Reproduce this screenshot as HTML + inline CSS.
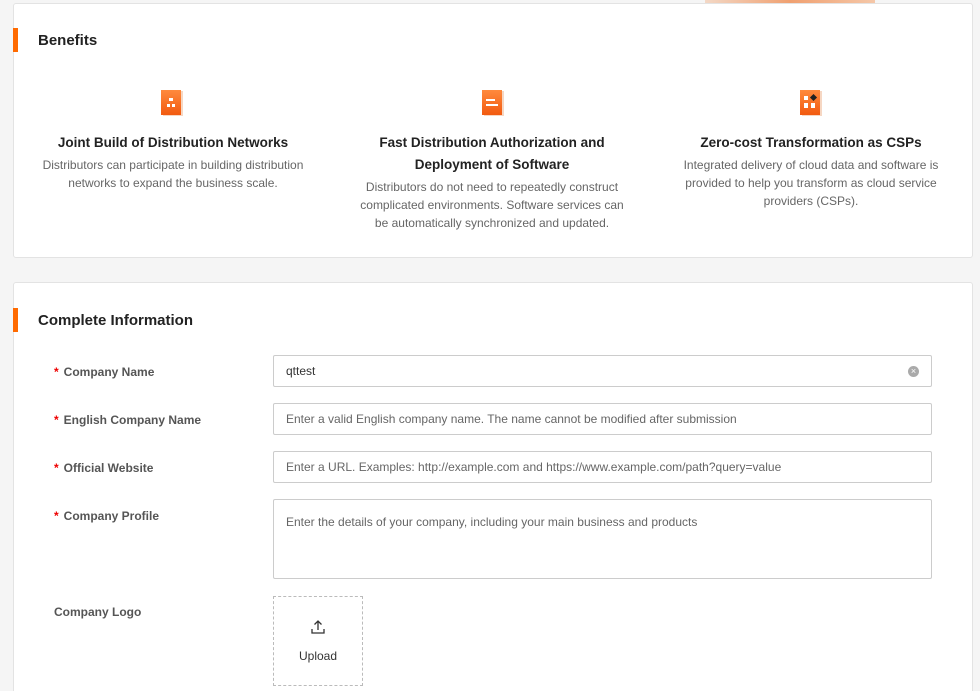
<!DOCTYPE html>
<html style="width:980px;height:691px;overflow:hidden"><head><style>
body{margin:0;width:980px;height:691px;background:#f5f5f5;font-family:"Liberation Sans",sans-serif;overflow:hidden;position:relative;color:#333}
.card{position:absolute;left:13px;width:958px;background:#fff;border:1px solid #e3e3e3;border-radius:3px}
.bar{position:absolute;left:-1px;width:5px;height:24px;background:#ff6a00}
.h{position:absolute;left:24px;font-size:15px;font-weight:bold;color:#222}
.col{position:absolute;top:0;width:300px;text-align:center}
.col .t{font-size:13.5px;font-weight:bold;color:#222;line-height:22px}
.col .d{font-size:12px;color:#666;line-height:18px;margin-top:2px}
.ic{position:absolute;top:86px;width:20px;height:25px;background:linear-gradient(#ff8a3d,#f25a10);box-shadow:2px 1px 0 #f6d7c3}
.lab{position:absolute;left:40px;font-size:12px;font-weight:bold;color:#555}
.lab b{color:#e00;margin-right:5px}
.in{position:absolute;left:259px;height:32px;border:1px solid #ccc;border-radius:2px;font-size:12px;color:#666;line-height:30px;padding-left:12px;box-sizing:border-box;width:659px}
</style></head><body>
<div style="position:absolute;left:705px;top:0;width:170px;height:3px;background:linear-gradient(90deg,#f3d8c6,#f0a070,#f5c7a8)"></div>
<div class="card" style="top:3px;height:253px">
 <div class="bar" style="top:24px"></div>
 <div class="h" style="top:28px">Benefits</div>
 <div class="ic" style="left:147px"><div style="position:absolute;left:6px;top:8px;width:8px;height:9px;background:linear-gradient(#fff,#fff) 2px 0/4px 3px no-repeat,linear-gradient(#fff,#fff) 0 6px/3px 3px no-repeat,linear-gradient(#fff,#fff) 5px 6px/3px 3px no-repeat"></div></div>
 <div class="ic" style="left:468px"><div style="position:absolute;left:4px;top:9px;width:9px;height:2px;background:#fff"></div><div style="position:absolute;left:4px;top:14px;width:12px;height:2px;background:#fff"></div></div>
 <div class="ic" style="left:786px"><div style="position:absolute;left:4px;top:6px;width:4px;height:4px;background:#fff"></div><div style="position:absolute;left:4px;top:13px;width:4px;height:5px;background:#fff"></div><div style="position:absolute;left:11px;top:13px;width:4px;height:5px;background:#fff"></div><div style="position:absolute;left:11px;top:5px;width:5px;height:5px;background:#222;transform:rotate(45deg)"></div></div>
 <div class="col" style="left:9px;top:128px"><div class="t">Joint Build of Distribution Networks</div><div class="d">Distributors can participate in building distribution<br>networks to expand the business scale.</div></div>
 <div class="col" style="left:328px;top:128px"><div class="t">Fast Distribution Authorization and<br>Deployment of Software</div><div class="d">Distributors do not need to repeatedly construct<br>complicated environments. Software services can<br>be automatically synchronized and updated.</div></div>
 <div class="col" style="left:647px;top:128px"><div class="t">Zero-cost Transformation as CSPs</div><div class="d">Integrated delivery of cloud data and software is<br>provided to help you transform as cloud service<br>providers (CSPs).</div></div>
</div>
<div class="card" style="top:282px;height:420px">
 <div class="bar" style="top:25px"></div>
 <div class="h" style="top:29px">Complete Information</div>
 <div class="lab" style="top:82px"><b>*</b>Company Name</div>
 <div class="in" style="top:72px;color:#333">qttest<span style="position:absolute;right:12px;top:10px;width:11px;height:11px;border-radius:50%;background:#aaa;color:#fff;font-size:9px;line-height:11px;text-align:center">×</span></div>
 <div class="lab" style="top:130px"><b>*</b>English Company Name</div>
 <div class="in" style="top:120px">Enter a valid English company name. The name cannot be modified after submission</div>
 <div class="lab" style="top:178px"><b>*</b>Official Website</div>
 <div class="in" style="top:168px">Enter a URL. Examples: http://example.com and https://www.example.com/path?query=value</div>
 <div class="lab" style="top:226px"><b>*</b>Company Profile</div>
 <div class="in" style="top:216px;height:80px;line-height:14px;padding-top:15px">Enter the details of your company, including your main business and products</div>
 <div class="lab" style="top:322px">Company Logo</div>
 <div style="position:absolute;left:259px;top:313px;width:88px;height:88px;border:1px dashed #bbb;text-align:center;font-size:12px;color:#333">
  <svg width="16" height="16" viewBox="0 0 16 16" style="margin-top:22px"><path d="M8 11V2M4.5 5.5L8 2l3.5 3.5M2 10v4h12v-4" fill="none" stroke="#333" stroke-width="1.3"/></svg>
  <div style="margin-top:11px">Upload</div>
 </div>
</div>
</body></html>
